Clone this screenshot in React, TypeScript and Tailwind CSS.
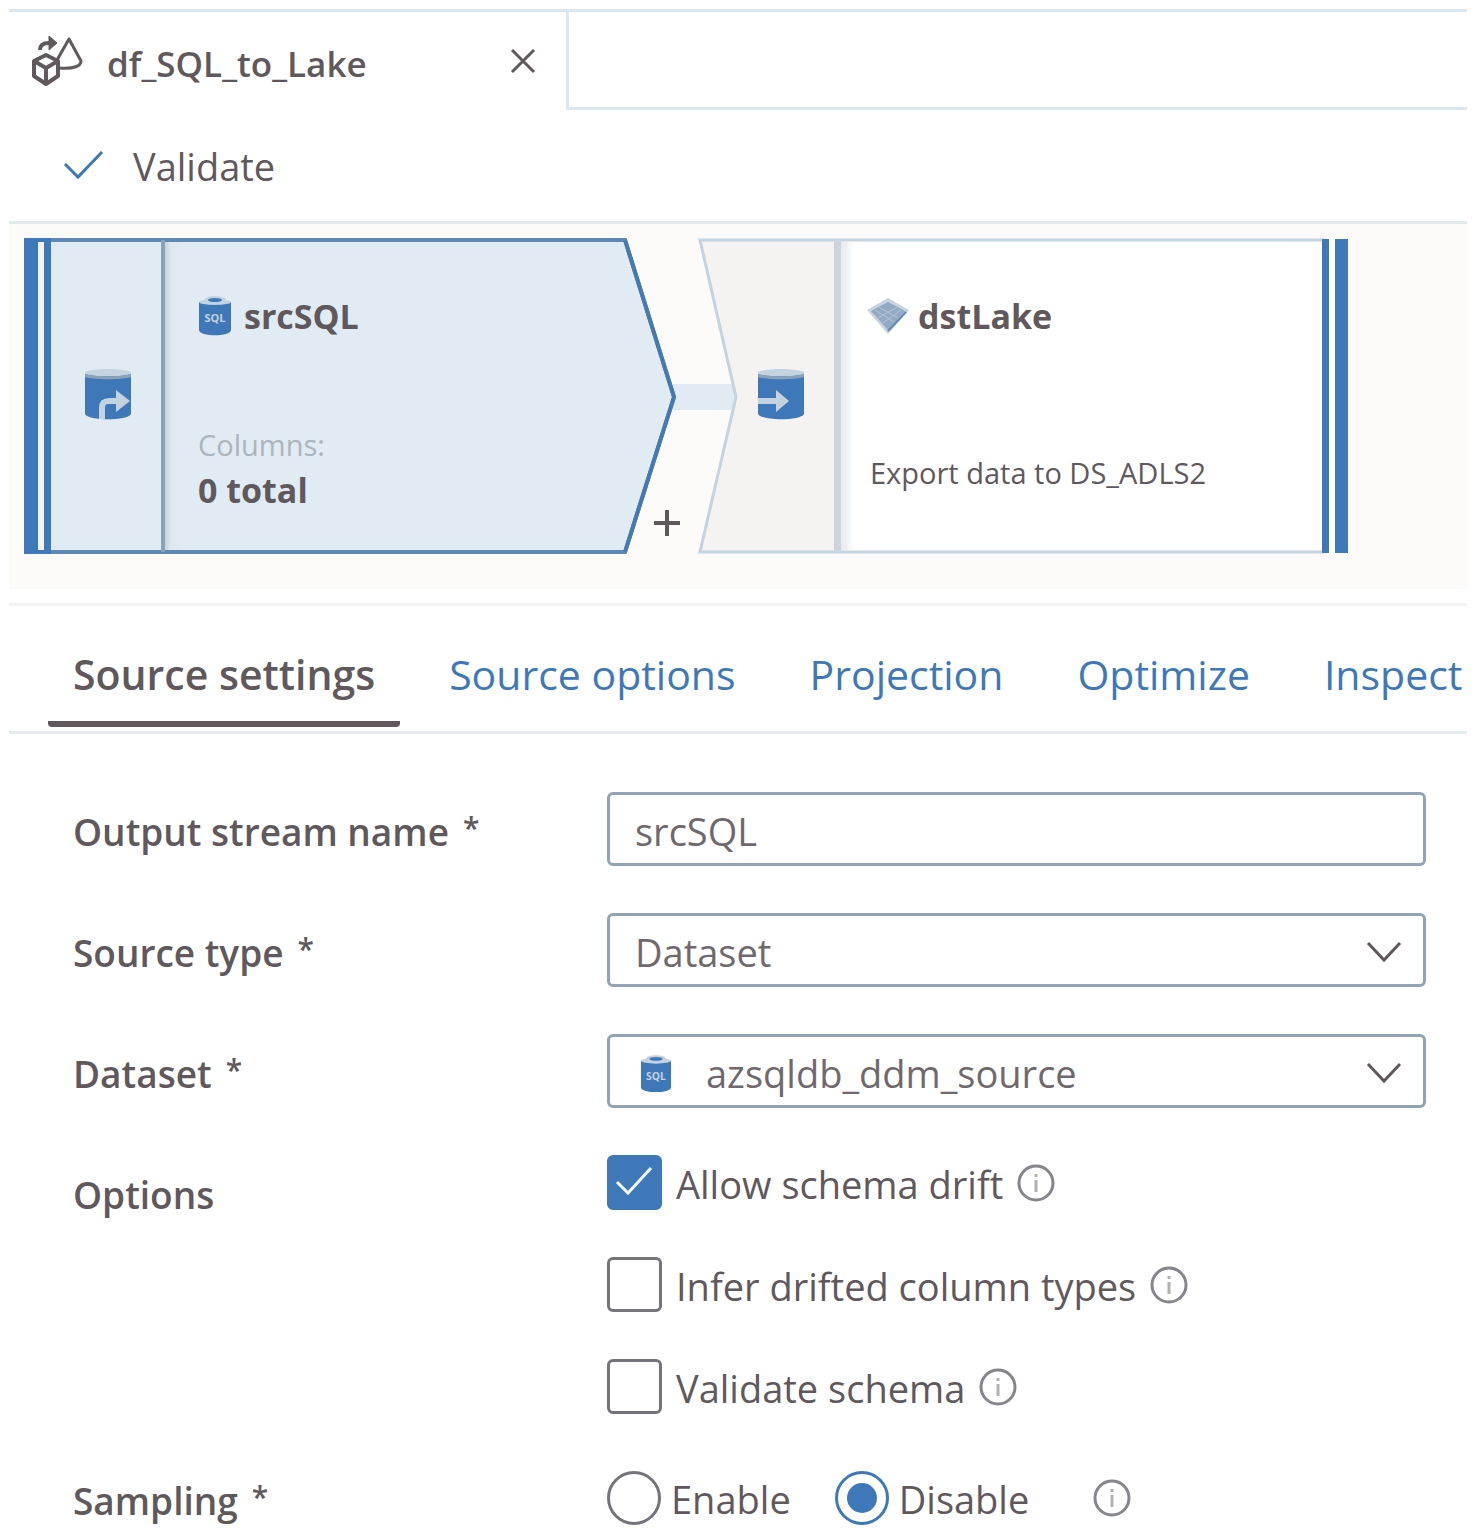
import { useState } from "react";
import type { ReactNode } from "react";

const TABS = ["Source settings", "Source options", "Projection", "Optimize", "Inspect"];

function DataFlowIcon() {
  return (
    <svg viewBox="0 0 54 52" className="h-[52px] w-[54px] shrink-0" fill="none" stroke="#5f585c" strokeWidth="4" strokeLinejoin="round" aria-hidden="true">
      <path d="M3 26 L15 20 L27 26 V41 L15 49 L3 41 Z" />
      <path d="M3 26 L15 33 L27 26 M15 33 V48" />
      <path d="M26 25 L38 4 L50 26 C50 31 43 34 29 33" strokeWidth="3" />
      <path d="M9 15 C9 10 12 8 18 8" />
      <path d="M18 1 L26 8 L18 15 Z" fill="#5f585c" strokeWidth="1" />
    </svg>
  );
}

function SqlIcon({ className }: { className: string }) {
  return (
    <svg viewBox="0 0 34 40" className={className} aria-hidden="true">
      <path d="M1 6 V34 C1 41 33 41 33 34 V6 Z" fill="#3f78b8" />
      <ellipse cx="17" cy="6" rx="16" ry="3" fill="#c3d3e0" />
      <ellipse cx="17" cy="4" rx="11" ry="4" fill="#c3d3e0" />
      <ellipse cx="17" cy="4" rx="7" ry="2" fill="#3f78b8" />
      <text x="17" y="26" textAnchor="middle" fontSize="11" fontWeight="700" fill="#c3d3e0">SQL</text>
    </svg>
  );
}

function DatabaseIcon({ direction }: { direction: "out" | "in" }) {
  return (
    <svg viewBox="0 0 48 52" className="mb-1 h-[52px] w-12 shrink-0" aria-hidden="true">
      <path d="M1 5 V46 C4 53 44 53 47 46 V5 Z" fill="#3f78b8" />
      <path d="M1 4 C8 0 40 0 47 4 V6 C40 9 8 9 1 6 Z" fill="#c3d3e0" />
      <path d="M1 6 C8 9 40 9 47 6 V9 C40 12 8 12 1 9 Z" fill="#8aa1b7" />
      {direction === "out" ? (
        <>
          <path d="M18 51 V40 C18 35 20 33 25 33 H33" fill="none" stroke="#c3d3e0" strokeWidth="6" />
          <path d="M32 22 L46 33 L32 44 Z" fill="#c3d3e0" />
        </>
      ) : (
        <path d="M1 30 H19 V22 L32 33 L19 44 V36 H1 Z" fill="#c3d3e0" />
      )}
    </svg>
  );
}

function LakeIcon() {
  return (
    <svg viewBox="0 0 44 36" className="h-9 w-11 shrink-0" aria-hidden="true">
      <path d="M22 0 L43 12 L22 36 L1 12 Z" fill="#c3d3e0" />
      <path d="M22 4 L39 13 L22 32 L5 13 Z" fill="#93abc2" />
      <path d="M13 9 L32 20 M9 12 L28 24 M31 9 L12 20 M35 12 L17 25" stroke="#b3c5d5" strokeWidth="1" />
      <path d="M22 33 L40 14" stroke="#6389b4" strokeWidth="2" />
    </svg>
  );
}

function InfoButton({ label }: { label: string }) {
  return (
    <button type="button" aria-label={label} className="shrink-0">
      <svg viewBox="0 0 38 38" className="size-[38px]" fill="none" stroke="#85868c" aria-hidden="true">
        <circle cx="19" cy="19" r="17" strokeWidth="3" />
        <path d="M19 16 V28 M19 10 V13" stroke="#b3b0b0" strokeWidth="3" />
      </svg>
    </button>
  );
}

function Chevron() {
  return (
    <svg viewBox="0 0 36 22" className="pointer-events-none absolute top-1/2 right-6 mt-0.5 h-[22px] w-9 -translate-y-1/2" fill="none" stroke="#5f585c" strokeWidth="3" aria-hidden="true">
      <path d="M2 2 L18 19 L34 2" />
    </svg>
  );
}

function Label({ htmlFor, children, required = true }: { htmlFor?: string; children: ReactNode; required?: boolean }) {
  const Tag = htmlFor ? "label" : "span";
  return (
    <Tag htmlFor={htmlFor} className="flex items-start gap-3.5 pt-1.5 text-[37px] leading-[48px] font-semibold">
      {children}
      {required && <span className="text-[30px] leading-[40px]">*</span>}
    </Tag>
  );
}

function CheckOption({ label, initial = false }: { label: string; initial?: boolean }) {
  const [on, setOn] = useState(initial);
  return (
    <div className="flex items-center gap-3.5">
      <label className="flex items-center gap-3.5">
        <span className="relative flex size-[55px] shrink-0">
          <input
            type="checkbox"
            checked={on}
            onChange={() => setOn(!on)}
            className="size-full appearance-none rounded-md border-3 border-[#74737a] bg-white checked:border-[#3f78b8] checked:bg-[#3f78b8]"
          />
          {on && (
            <svg viewBox="0 0 55 55" className="pointer-events-none absolute inset-0 size-full" fill="none" stroke="#f4f7fa" strokeWidth="3" aria-hidden="true">
              <path d="M10 27 L21 38 L44 13" />
            </svg>
          )}
        </span>
        <span className="pt-0.5">{label}</span>
      </label>
      <InfoButton label={`About ${label}`} />
    </div>
  );
}

function RadioOption({ label, checked, onSelect }: { label: string; checked: boolean; onSelect: () => void }) {
  return (
    <label className="flex items-center gap-2.5">
      <span className="relative flex size-[54px] shrink-0">
        <input
          type="radio"
          name="sampling"
          checked={checked}
          onChange={onSelect}
          className="size-full appearance-none rounded-full border-3 border-[#74737a] bg-white checked:border-[#3f78b8]"
        />
        {checked && <span className="pointer-events-none absolute inset-3 rounded-full bg-[#3f78b8]" />}
      </span>
      <span className="pt-0.5">{label}</span>
    </label>
  );
}

function SourceNode() {
  return (
    <article className="relative flex h-[316px] w-[652px] shrink-0">
      <svg viewBox="0 0 652 316" className="absolute inset-0 size-full" aria-hidden="true">
        <defs>
          <linearGradient id="sourceFold">
            <stop offset="0" stopColor="#c3d3e0" />
            <stop offset="0.3" stopColor="#dfe8ef" />
            <stop offset="1" stopColor="#e1ebf4" />
          </linearGradient>
        </defs>
        <path d="M2 2 H601 L650 159 L601 314 H2 Z" fill="#e1ebf4" stroke="#5f89b5" strokeWidth="4" />
        <path d="M601 2 L650 159 L601 314" fill="none" stroke="#4579b2" strokeWidth="4" />
        <rect x="141" y="4" width="20" height="308" fill="url(#sourceFold)" />
        <rect x="137" y="2" width="4" height="312" fill="#8aa1b7" />
        <rect x="0" y="0" width="27" height="316" fill="#3f78b8" />
        <rect x="14" y="4" width="6" height="308" fill="#f1f3f5" />
      </svg>
      <div className="relative flex w-[139px] items-center justify-end pr-[31px]">
        <DatabaseIcon direction="out" />
      </div>
      <div className="relative flex flex-col pt-[55px] pl-[35px]">
        <h2 className="flex items-center gap-3 text-[34px] leading-[46px] font-bold">
          <SqlIcon className="h-10 w-[34px]" />
          srcSQL
        </h2>
        <p className="mt-[86px] text-[29px] leading-[40px] text-[#abb5bd]">Columns:</p>
        <p className="text-[34px] leading-[50px] font-bold">0 total</p>
      </div>
      <button type="button" aria-label="Add step" className="absolute right-[-4px] bottom-[18px]">
        <svg viewBox="0 0 26 26" className="size-[26px]" stroke="#5f585c" strokeWidth="4" aria-hidden="true">
          <path d="M13 0 V26 M0 13 H26" />
        </svg>
      </button>
    </article>
  );
}

function SinkNode() {
  return (
    <article className="relative flex h-[316px] w-[652px] shrink-0">
      <svg viewBox="0 0 652 316" className="absolute inset-0 size-full" aria-hidden="true">
        <defs>
          <linearGradient id="sinkFold">
            <stop offset="0" stopColor="#e4eaef" />
            <stop offset="1" stopColor="#ffffff" />
          </linearGradient>
        </defs>
        <path d="M2 2 H650 V314 H2 L38 159 Z" fill="#ffffff" />
        <path d="M2 2 H137 V314 H2 L38 159 Z" fill="#f5f3f1" />
        <path d="M626 2 H2 L38 159 L2 314 H626" fill="none" stroke="#c3d3e0" strokeWidth="3" />
        <rect x="143" y="4" width="14" height="308" fill="url(#sinkFold)" />
        <rect x="136" y="2" width="7" height="312" fill="#cdd4da" />
        <rect x="624" y="1" width="7" height="314" fill="#3f78b8" />
        <rect x="637" y="1" width="13" height="314" fill="#3f78b8" />
      </svg>
      <div className="relative flex w-[139px] items-center justify-end pr-8">
        <DatabaseIcon direction="in" />
      </div>
      <div className="relative flex flex-col pt-[55px] pl-[29px]">
        <h2 className="flex items-center gap-2 text-[34px] leading-[46px] font-bold">
          <LakeIcon />
          dstLake
        </h2>
        <p className="mt-[114px] pl-1 text-[29px] leading-[40px]">Export data to DS_ADLS2</p>
      </div>
    </article>
  );
}

export default function App() {
  const [tab, setTab] = useState(TABS[0]);
  const [sampling, setSampling] = useState("Disable");
  const [name, setName] = useState("srcSQL");

  return (
    <main className="min-h-screen overflow-hidden bg-white px-[9px] pt-[9px] font-['Open_Sans','Noto_Sans',sans-serif] text-[38px] leading-[50px] text-[#5f585c]">
      <header className="flex h-[101px] border-t-3 border-[#dbe6ee]">
        <div className="flex w-[560px] shrink-0 items-center border-r-3 border-[#dbe6ee] pr-[30px] pl-[22px]">
          <DataFlowIcon />
          <span className="ml-[22px] pt-1.5 text-[35px] leading-[46px] font-semibold">df_SQL_to_Lake</span>
          <button type="button" aria-label="Close tab" className="ml-auto">
            <svg viewBox="0 0 26 26" className="size-[26px]" stroke="#5f585c" strokeWidth="3" aria-hidden="true">
              <path d="M2 2 L24 24 M24 2 L2 24" />
            </svg>
          </button>
        </div>
        <div className="flex-1 border-b-3 border-[#dbe6ee]" />
      </header>

      <div className="flex h-[114px] items-center border-b-3 border-[#e3e8ea] pl-[54px]">
        <button type="button" className="flex items-center gap-7">
          <svg viewBox="0 0 42 30" className="h-[30px] w-[42px]" fill="none" stroke="#3f78b8" strokeWidth="3" aria-hidden="true">
            <path d="M2 13 L15 26 L39 1" />
          </svg>
          <span>Validate</span>
        </button>
      </div>

      <section aria-label="Data flow" className="relative flex h-[365px] gap-[22px] overflow-hidden bg-[#fcfbfa] pt-3.5 pl-[15px]">
        <div className="absolute top-[160px] left-[664px] h-[26px] w-[66px] bg-[#e1ebf4]" />
        <SourceNode />
        <SinkNode />
      </section>

      <nav className="mt-3.5 flex h-[131px] items-end gap-6 border-y-3 border-[#e6ebee] border-t-[#f3f3f1] pb-1 pl-[39px] text-[41px] leading-[54px]" role="tablist">
        {TABS.map((t) => (
          <button
            key={t}
            type="button"
            role="tab"
            aria-selected={t === tab}
            onClick={() => setTab(t)}
            className="shrink-0 rounded-sm border-b-6 border-transparent px-[25px] pb-5 whitespace-nowrap text-[#3f78b8] aria-selected:border-[#5f585c] aria-selected:font-semibold aria-selected:text-[#5f585c]"
          >
            {t}
          </button>
        ))}
      </nav>

      <form className="grid grid-cols-[534px_1fr] items-center gap-y-[47px] pt-[58px] pr-[41px] pl-16" onSubmit={(e) => e.preventDefault()}>
        <Label htmlFor="stream">Output stream name</Label>
        <input
          id="stream"
          value={name}
          onChange={(e) => setName(e.target.value)}
          className="h-[74px] w-full appearance-none rounded-md border-3 border-[#91a3b4] bg-white px-[25px] pt-1 text-[#6f696d] outline-none"
        />

        <Label htmlFor="type">Source type</Label>
        <div className="relative flex">
          <select id="type" className="h-[74px] w-full appearance-none rounded-md border-3 border-[#91a3b4] bg-white pt-1 pr-[70px] pl-[25px] text-[#6f696d] outline-none">
            <option>Dataset</option>
          </select>
          <Chevron />
        </div>

        <Label htmlFor="dataset">Dataset</Label>
        <div className="relative flex">
          <select id="dataset" className="h-[74px] w-full appearance-none rounded-md border-3 border-[#91a3b4] bg-white pt-1 pr-[70px] pl-24 text-[#6f696d] outline-none">
            <option>azsqldb_ddm_source</option>
          </select>
          <SqlIcon className="pointer-events-none absolute top-[21px] left-[33px] h-[38px] w-8" />
          <Chevron />
        </div>

        <div className="self-start pt-2.5">
          <Label required={false}>Options</Label>
        </div>
        <div className="flex flex-col gap-[47px]">
          <CheckOption label="Allow schema drift" initial />
          <CheckOption label="Infer drifted column types" />
          <CheckOption label="Validate schema" />
        </div>

        <div className="mt-2.5">
          <Label>Sampling</Label>
        </div>
        <div role="radiogroup" aria-label="Sampling" className="mt-2.5 flex items-center">
          <div className="flex gap-11">
            {["Enable", "Disable"].map((o) => (
              <RadioOption key={o} label={o} checked={sampling === o} onSelect={() => setSampling(o)} />
            ))}
          </div>
          <div className="ml-16 flex">
            <InfoButton label="About sampling" />
          </div>
        </div>
      </form>
    </main>
  );
}
